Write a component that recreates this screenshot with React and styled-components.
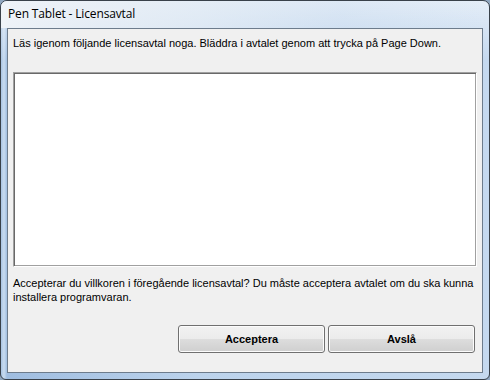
import React from "react";
import styled, { createGlobalStyle } from "styled-components";

const Global = createGlobalStyle`
  html, body { margin: 0; padding: 0; width: 490px; height: 380px; overflow: hidden; background: #8fa6bf; }
  #root { width: 490px; height: 380px; }
`;

const Window = styled.div`
  box-sizing: border-box;
  width: 490px;
  height: 380px;
  display: flex;
  flex-direction: column;
  border: 1px solid #39414a;
  border-radius: 7px 7px 6px 6px;
  overflow: hidden;
  background:
    linear-gradient(180deg, rgba(255,255,255,0.55) 0px, rgba(255,255,255,0) 60px),
    linear-gradient(90deg, #a9c4e3 0px, #c9dcf0 3px, #9fbde0 6px, #bcd3ec 40%, #c5d9ef 100%);
  padding: 0 6px 6px 6px;
  font-family: "Liberation Sans", Arial, sans-serif;
`;

const TitleBar = styled.div`
  height: 27px;
  display: flex;
  align-items: center;
  padding: 0 1px 3px;
  box-sizing: border-box;
  font-family: "Open Sans", "Liberation Sans", sans-serif;
  font-size: 12px;
  letter-spacing: -0.15px;
  color: #000;
  background: linear-gradient(90deg, rgba(240,244,248,0.95) 0%, rgba(232,239,246,0.7) 35%, rgba(200,218,238,0.2) 70%, rgba(200,218,238,0) 100%);
  margin: 0 -6px;
  padding-left: 7px;
  text-shadow: 0 0 8px rgba(255,255,255,0.9);
`;

const Panel = styled.div`
  flex: 1;
  display: flex;
  flex-direction: column;
  border: 1px solid #6d7c8c;
  background: #f0f0f0;
  padding: 7px 5px 0 5px;
  font-size: 11px;
  color: #000;
`;

const Text = styled.p`
  margin: 0;
  line-height: 14px;
  margin-top: ${(p) => p.$mt || 0}px;
`;

const TextArea = styled.div`
  height: 193px;
  margin-top: 22px;
  background: #fff;
  border: 1px solid;
  border-color: #a0a0a0 #ffffff #ffffff #a0a0a0;
  box-shadow: inset 1px 1px 0 #696969, inset -1px -1px 0 #a0a0a0;
`;

const Buttons = styled.div`
  display: flex;
  justify-content: flex-end;
  gap: 3px;
  margin-top: 21px;
  padding-right: 2px;
`;

const Button = styled.button`
  width: 147px;
  height: 28px;
  border: 1px solid #707070;
  border-radius: 3px;
  background: linear-gradient(180deg, #f2f2f2 0%, #ebebeb 50%, #dddddd 51%, #cfcfcf 100%);
  box-shadow: inset 0 0 0 1px #fcfcfc;
  font-family: "Liberation Sans", Arial, sans-serif;
  font-weight: bold;
  font-size: 11px;
  color: #000;
  padding: 0;
`;

export default function App() {
  return (
    <>
      <Global />
      <Window>
        <TitleBar>Pen Tablet - Licensavtal</TitleBar>
        <Panel>
          <Text>Läs igenom följande licensavtal noga. Bläddra i avtalet genom att trycka på Page Down.</Text>
          <TextArea />
          <Text $mt={9}>
            Accepterar du villkoren i föregående licensavtal? Du måste acceptera avtalet om du ska kunna installera programvaran.
          </Text>
          <Buttons>
            <Button>Acceptera</Button>
            <Button>Avslå</Button>
          </Buttons>
        </Panel>
      </Window>
    </>
  );
}
